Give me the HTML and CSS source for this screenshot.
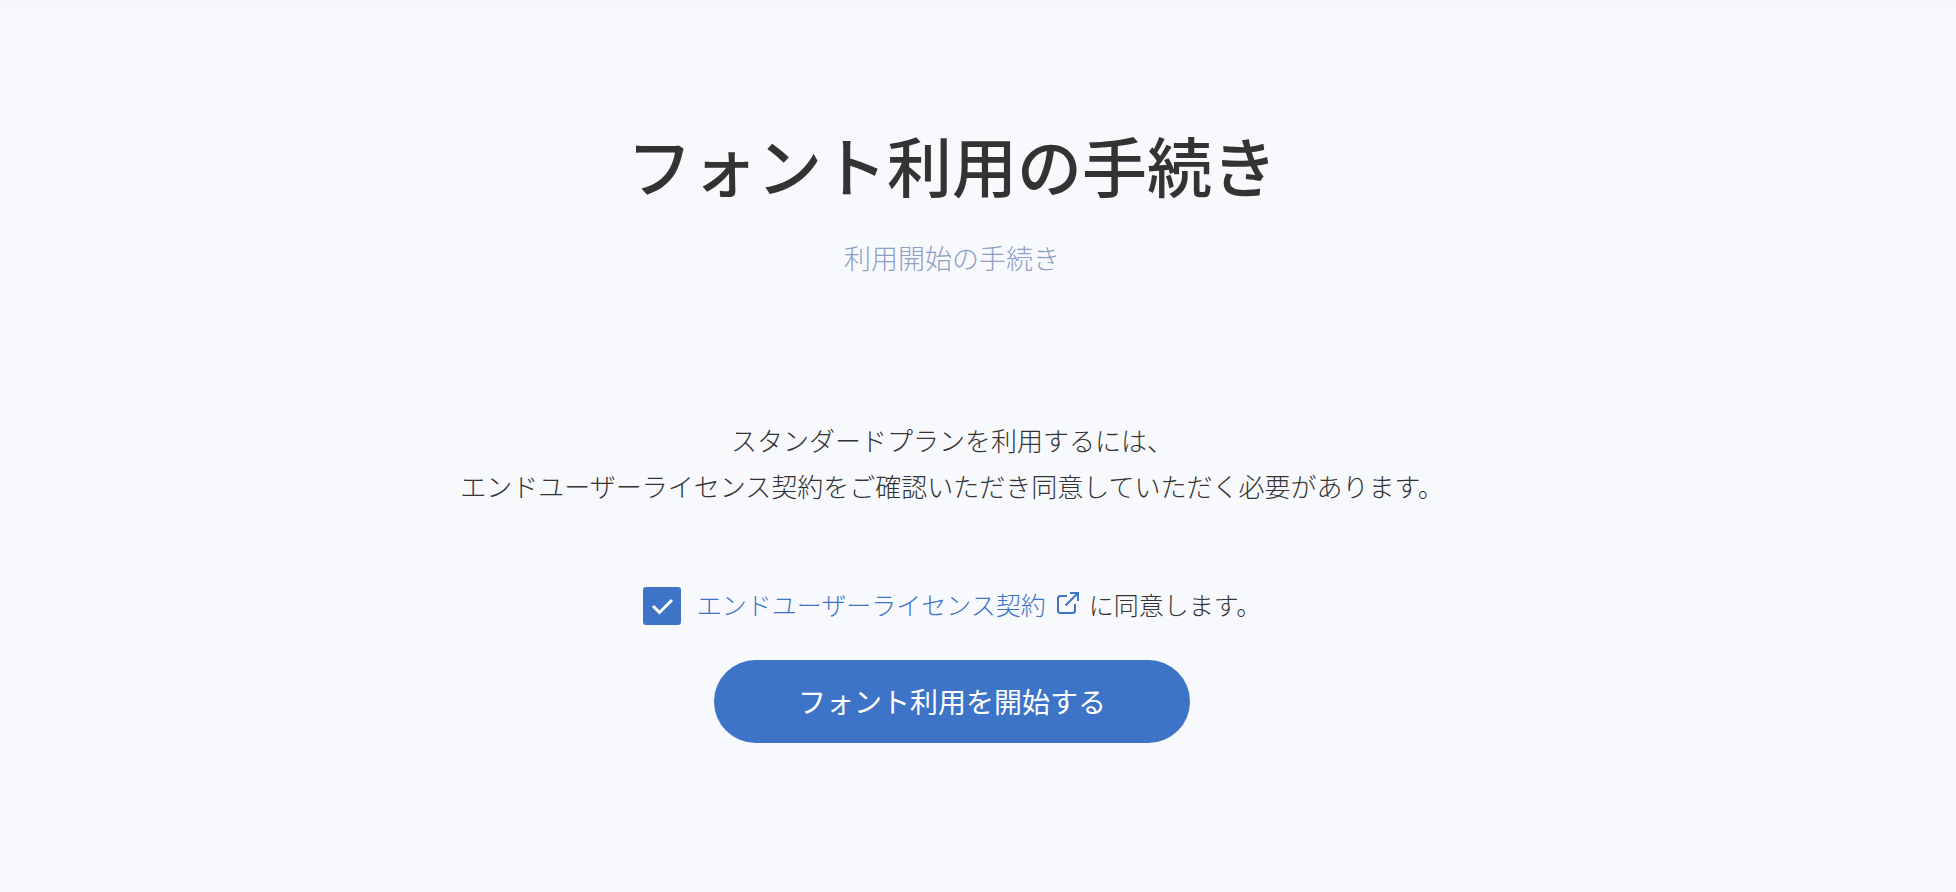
FILE: index.html
```html
<!DOCTYPE html>
<html lang="ja">
<head>
<meta charset="utf-8">
<meta name="viewport" content="width=device-width, initial-scale=1">
<title>フォント利用の手続き</title>
<link rel="stylesheet" href="styles.css">
</head>
<body>
<main class="procedure">
    <!--タイトル-->
    <h1 class="title">フォント利用の手続き</h1>
    <p class="subtitle">利用開始の手続き</p>

    <p class="lead">スタンダードプランを利用するには、<br>エンドユーザーライセンス契約をご確認いただき同意していただく必要があります。</p>

    <!--同意フォーム-->
    <form class="agree_form">
        <div class="agree">
            <input class="agree_check" type="checkbox" id="agree" aria-labelledby="agree_text" checked>
            <div class="agree_text" id="agree_text">
                <a href="#license">エンドユーザーライセンス契約<svg class="icon_blank" viewBox="0 0 22 22" aria-hidden="true"><path d="M10 4H3.5Q1 4 1 6.500V18.500Q1 21 3.500 21H15.500Q18 21 18 18.500V12M13 1H21V9M21 1L8.500 13.500"/></svg></a>
                <label for="agree">に同意します。</label>
            </div>
        </div>
        <button class="btn" type="button">フォント利用を開始する</button>
    </form>
</main>
</body>
</html>
```

FILE: styles.css
```css
/*共通*/
*{box-sizing:border-box;}
body,h1,p{margin:0; padding:0;}
body{
    min-height:100vh;
    background:#f8f9fd linear-gradient(#f3f5f9, #f8f9fd) no-repeat 0 0 / 100% 14px;
    color:#333;
    font-family:"Noto Sans CJK JP", sans-serif;
    font-weight:300;
    font-size:26px;
}

/*手続き*/
.procedure{padding:116px 52px 80px 0; text-align:center;}
.title{font-size:65px; line-height:96px; font-weight:500;}
.subtitle{margin-top:26px; font-size:27px; line-height:40px; color:#8c9fc4;}
.lead{margin-top:139px; line-height:46px;}

/*同意フォーム*/
.agree_form{display:flex; flex-direction:column; align-items:center; margin-top:78px;}
.agree{display:flex; align-items:center; gap:16px; font-size:25px; line-height:34px;}
.agree_check{
    -webkit-appearance:none;
    appearance:none;
    flex:none;
    width:38px;
    height:38px;
    margin:0;
    border:2px solid #3d74c7;
    border-radius:3px;
    background:#fff;
    cursor:pointer;
}
.agree_check:checked{
    background:#3d74c7 url("data:image/svg+xml,%3Csvg xmlns='http://www.w3.org/2000/svg' viewBox='0 0 38 38'%3E%3Cpath d='M10 19L16.500 25.500L29 13' fill='none' stroke='%23fff' stroke-width='3'/%3E%3C/svg%3E") no-repeat center / 38px 38px;
}
.agree_text{display:flex; align-items:center; gap:10px; padding-bottom:4px;}
.agree_text a{display:flex; align-items:center; gap:11px; color:#3d74c7; text-decoration:none;}
.icon_blank{width:22px; height:22px; margin-bottom:2px; fill:none; stroke:#3d74c7; stroke-width:2;}
.btn{
    width:476px;
    max-width:100%;
    height:83px;
    margin-top:35px;
    padding:0 0 2px;
    border:none;
    border-radius:42px;
    background:#3d74c7;
    color:#fff;
    font-family:inherit;
    font-size:28px;
    font-weight:400;
    cursor:pointer;
}
.btn:hover{background:#3467b5;}
```
